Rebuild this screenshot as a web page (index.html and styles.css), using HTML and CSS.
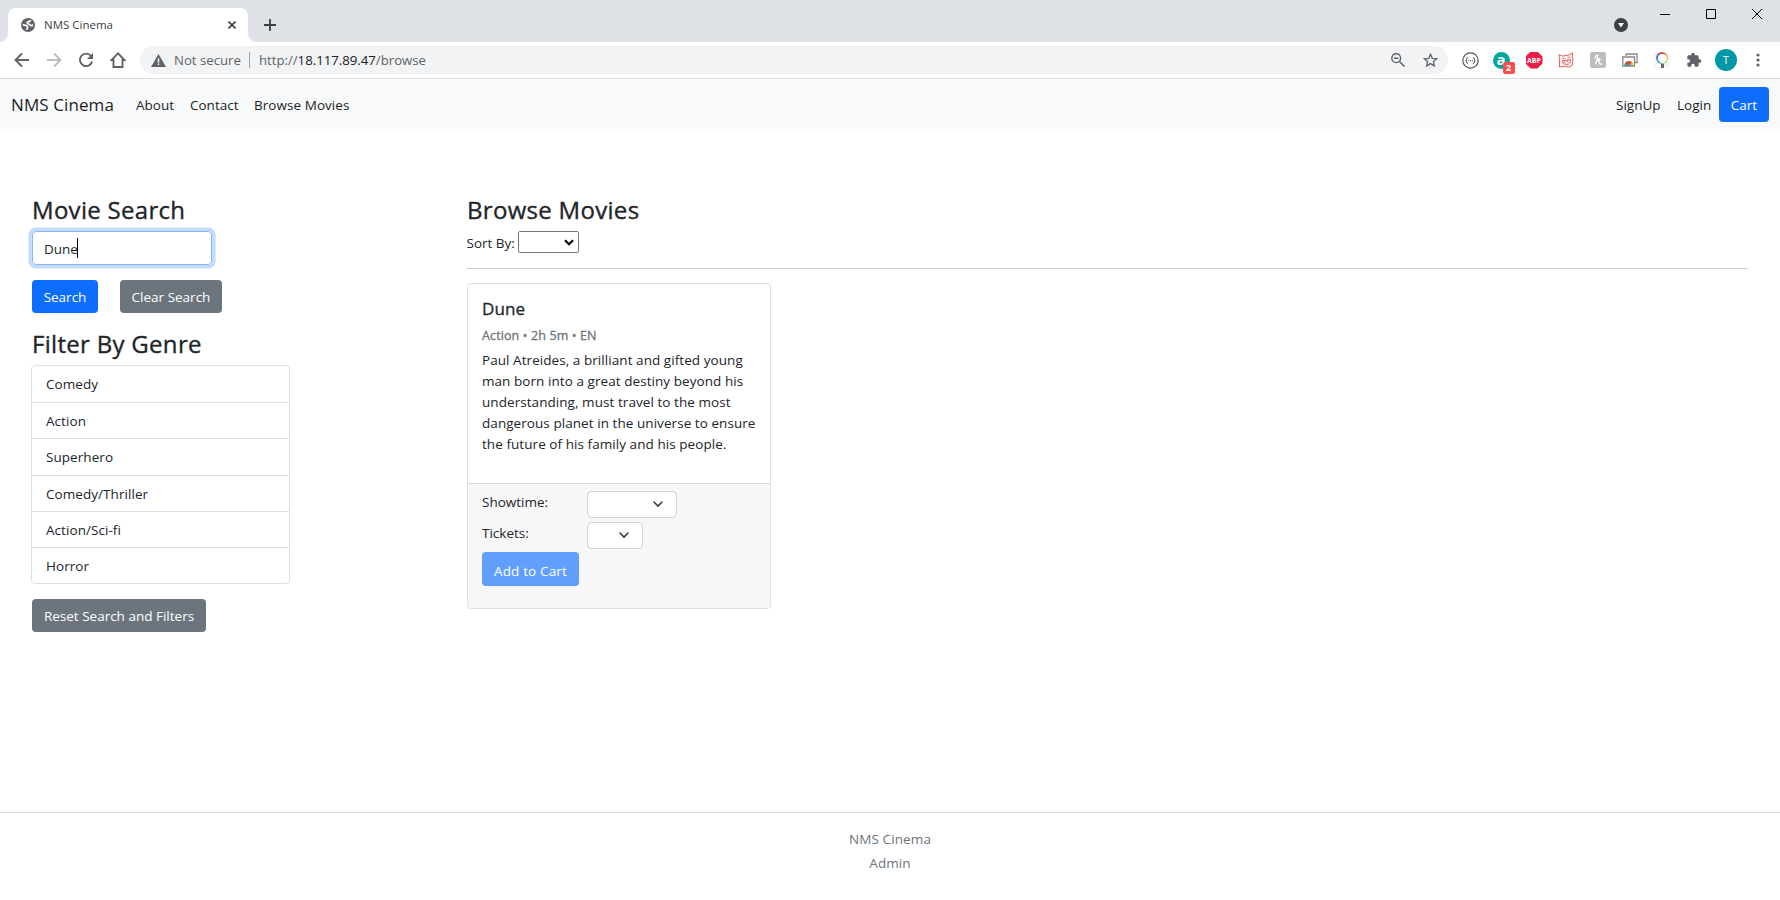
FILE: index.html
```html
<!DOCTYPE html>
<html lang="en">
<head>
<meta charset="utf-8">
<title>NMS Cinema</title>
<link rel="stylesheet" href="styles.css">
</head>
<body>
<header class="chrome">
  <div class="tabstrip">
    <div class="tab">
      <svg class="globe" width="14" height="14" viewBox="0 0 14 14"><circle cx="7" cy="7" r="7" fill="#5f6368"/><path d="M1.800 6.200C3.500 8.200 5 6.600 6.300 8.200S5.600 10 6 11.900M9.600 2.200C9.200 4.400 6.400 3 6.300 4.600S8.400 6.200 9.200 7.200 11 7.400 11.900 6.800" fill="none" stroke="#fff" stroke-width="1.700"/></svg>
      <span class="tab-title">NMS Cinema</span>
      <svg class="tab-close" width="8" height="8" viewBox="0 0 8 8"><path d="M.5.5l7 7M7.500.5l-7 7" stroke="#3c4043" stroke-width="1.6"/></svg>
    </div>
    <svg class="newtab" width="12" height="12" viewBox="0 0 12 12"><path d="M6 0v12M0 6h12" stroke="#3c4043" stroke-width="1.8"/></svg>
    <svg class="update" width="14" height="14" viewBox="0 0 14 14"><circle cx="7" cy="7" r="7" fill="#3c4043"/><path d="M4 5h6L7 9.500z" fill="#fff"/></svg>
    <div class="winbtns">
      <svg width="10" height="11" viewBox="0 0 10 11"><path d="M0 5.500h10" stroke="#000"/></svg>
      <svg width="10" height="10" viewBox="0 0 10 10"><path d="M.5.5h9v9h-9z" fill="none" stroke="#000"/></svg>
      <svg width="10" height="10" viewBox="0 0 10 10"><path d="M0 0l10 10M10 0L0 10" stroke="#000"/></svg>
    </div>
  </div>
  <div class="toolbar">
    <svg class="nav-ic" width="16" height="16" viewBox="0 0 16 16"><path d="M15 8H2M8 1.500L1.500 8 8 14.500" fill="none" stroke="#5f6368" stroke-width="1.9"/></svg>
    <svg class="nav-ic" width="16" height="16" viewBox="0 0 16 16"><path d="M1 8h13M8 1.500L14.500 8 8 14.500" fill="none" stroke="#babcbe" stroke-width="1.9"/></svg>
    <svg class="nav-ic" width="16" height="16" viewBox="0 0 16 16"><path d="M13 4a6.200 6.200 0 1 0 1.100 5.500" fill="none" stroke="#5f6368" stroke-width="1.900"/><path d="M15 1v6H9z" fill="#5f6368"/></svg>
    <svg class="nav-ic" width="16" height="16" viewBox="0 0 16 16"><path d="M8 1.300L1.500 8H3.500V15H12.500V8H14.500z" fill="none" stroke="#5f6368" stroke-width="1.900"/></svg>
    <div class="omnibox">
      <svg width="15" height="13" viewBox="0 0 15 13"><path d="M7.500 0L15 13H0z" fill="#5f6368"/><path d="M7.500 4.500v4M7.500 9.500v1.600" stroke="#fff" stroke-width="1.500"/></svg>
      <span class="insecure">Not secure</span>
      <span class="sep"></span>
      <span class="url">http://<b>18.117.89.47</b>/browse</span>
      <svg class="zoom-ic" width="14" height="14" viewBox="0 0 14 14"><circle cx="5.200" cy="5.200" r="4.400" fill="none" stroke="#5f6368" stroke-width="1.400"/><path d="M8.500 8.500l5 5M3 5.200h4.400" stroke="#5f6368" stroke-width="1.500"/></svg>
      <svg class="star" width="15" height="14" viewBox="0 0 15 14"><path d="M7.500 1.300l1.800 4 4.400.4-3.300 2.900 1 4.300-3.900-2.300-3.900 2.300 1-4.300L1.300 5.700l4.400-.4z" fill="none" stroke="#5f6368" stroke-width="1.300"/></svg>
    </div>
    <div class="exts">
      <svg width="17" height="17" viewBox="0 0 17 17"><circle cx="8.500" cy="8.500" r="7.700" fill="#fff" stroke="#555" stroke-width="1.200"/><path d="M6 5.500q-1.500 0-1.300 1.500t-1 1.500q1.200 0 1 1.500T6 11.500M11 5.500q1.500 0 1.300 1.500t1 1.500q-1.200 0-1 1.500t-1.300 1.500M6.200 8.500h1M8 8.500h1M9.800 8.500h1" fill="none" stroke="#555"/></svg>
      <span class="ext-a">a<i>2</i></span>
      <span class="abp">ABP</span>
      <svg width="16" height="16" viewBox="0 0 16 16"><path d="M1 2.500L4.500 4 11 3l3.500-2.200-.3 4 .8 2-.8 6.700-3 1.500-4-.5-5.700.5L1.500 9z" fill="#fdf1f0" stroke="#df6560"/><path d="M4.500 6.500L7 6M9.500 6L12 4.800M4 9l8.500-1.500Q12.500 12.500 8.500 12.500T4 9M6.500 8.800l.3 1.700M9.500 8.200l.2 1.800" fill="none" stroke="#df6560"/></svg>
      <span class="honey"><svg width="16" height="16" viewBox="0 0 16 16"><path d="M4.500 6.500C6 4 7.800 2.200 7.800 3.600S6.300 9 5.800 12.500M6.300 9C8 6.500 10.300 6 9.900 7.500S8 9 8 9s1.300 0 1.500 2 1.200 1.500 2.500.5" fill="none" stroke="#fff" stroke-width="1.400"/></svg></span>
      <svg width="16" height="14" viewBox="0 0 16 14"><path d="M4 3V1h11v8.500h-2" fill="none" stroke="#888" stroke-width="1.300"/><path d="M.8 4h11.700v9H.8z" fill="#fff" stroke="#888" stroke-width="1.300"/><path d="M2.500 12.400a4.300 4.300 0 0 1 8.600 0z" fill="#ea4335"/><path d="M2.500 12.400q0-2 1.200-3.200l3.100 3.200z" fill="#34a853"/><path d="M7 12.400l2.500-2.900h1.100q.5 1.300.5 2.900z" fill="#fbbc04"/><path d="M4.800 12.400a2 2 0 0 1 4 0z" fill="#4285f4"/></svg>
      <span class="ring"><i></i></span>
      <svg width="16" height="16" viewBox="0 0 24 24"><path d="M20.500 11H19V7c0-1.100-.9-2-2-2h-4V3.500a2.500 2.500 0 0 0-5 0V5H4c-1.100 0-2 .9-2 2v3.800h1.500a2.700 2.700 0 0 1 0 5.400H2V20c0 1.100.9 2 2 2h3.800v-1.500a2.700 2.700 0 0 1 5.400 0V22H17c1.100 0 2-.9 2-2v-4h1.500a2.500 2.500 0 0 0 0-5z" fill="#5f6368"/></svg>
      <span class="avatar">T</span>
      <svg width="4" height="14" viewBox="0 0 4 14"><circle cx="2" cy="2" r="1.600" fill="#5f6368"/><circle cx="2" cy="7" r="1.600" fill="#5f6368"/><circle cx="2" cy="12" r="1.600" fill="#5f6368"/></svg>
    </div>
  </div>
</header>

<nav class="navbar">
  <a class="brand">NMS Cinema</a>
  <a class="link l-about">About</a>
  <a class="link l-contact">Contact</a>
  <a class="link l-browse">Browse Movies</a>
  <a class="link l-signup">SignUp</a>
  <a class="link l-login">Login</a>
  <a class="btn btn-cart">Cart</a>
</nav>

<main class="content">
  <aside class="sidebar">
    <h3 class="h-search">Movie Search</h3>
    <div class="input"><span class="t-input">Dune</span><span class="caret"></span></div>
    <div class="btn-row">
      <button class="btn b-search">Search</button>
      <button class="btn grey b-clear">Clear Search</button>
    </div>
    <h3 class="h-filter">Filter By Genre</h3>
    <ul class="genres">
      <li><span>Comedy</span></li>
      <li><span>Action</span></li>
      <li><span>Superhero</span></li>
      <li><span>Comedy/Thriller</span></li>
      <li><span>Action/Sci-fi</span></li>
      <li><span>Horror</span></li>
    </ul>
    <button class="btn grey b-reset">Reset Search and Filters</button>
  </aside>
  <section class="results">
    <h3 class="h-browse">Browse Movies</h3>
    <div class="sort"><span class="t-sort">Sort By:</span>
      <span class="select-native"><svg width="10" height="7" viewBox="0 0 10 7"><path d="M1 1.200l4 4 4-4" fill="none" stroke="#000" stroke-width="2.200"/></svg></span>
    </div>
    <article class="card">
      <div class="card-body">
        <h5>Dune</h5>
        <h6>Action • 2h 5m • EN</h6>
        <p>Paul Atreides, a brilliant and gifted young<br>man born into a great destiny beyond his<br>understanding, must travel to the most<br>dangerous planet in the universe to ensure<br>the future of his family and his people.</p>
      </div>
      <div class="card-footer">
        <div class="field"><label>Showtime:</label><span class="select s-time"><svg width="10" height="7" viewBox="0 0 10 7"><path d="M1 1l4 4 4-4" fill="none" stroke="#343a40" stroke-width="1.600" stroke-linecap="round"/></svg></span></div>
        <div class="field"><label>Tickets:</label><span class="select s-tix"><svg width="10" height="7" viewBox="0 0 10 7"><path d="M1 1l4 4 4-4" fill="none" stroke="#343a40" stroke-width="1.600" stroke-linecap="round"/></svg></span></div>
        <button class="btn b-add">Add to Cart</button>
      </div>
    </article>
  </section>
</main>

<footer class="footer">
  <div>NMS Cinema</div>
  <div>Admin</div>
</footer>
</body>
</html>
```
FILE: styles.css
```css
* { box-sizing: border-box; }
body { margin: 0; width: 1780px; height: 900px; overflow: hidden; display: flex; flex-direction: column; background: #fff; color: #212529; font: 13.5px/21px "Open Sans", "Noto Sans", sans-serif; white-space: nowrap; }
svg { display: block; flex: none; }
h3, h5, h6, p, ul { margin: 0; padding: 0; }

.chrome { flex: none; height: 79px; border-bottom: 1px solid #d9dbde; }
.tabstrip { height: 42px; background: #dee1e6; display: flex; align-items: flex-start; padding: 8px 18px 0 8px; }
.tab { position: relative; width: 240px; height: 34px; background: #fff; border-radius: 8px 8px 0 0; display: flex; align-items: center; padding: 0 12px 0 13px; }
.tab::before, .tab::after { content: ""; position: absolute; bottom: 0; width: 8px; height: 8px; }
.tab::before { left: -8px; background: radial-gradient(circle at 0 0, #dee1e6 7.500px, #fff 8px); }
.tab::after { right: -8px; background: radial-gradient(circle at 100% 0, #dee1e6 7.500px, #fff 8px); }
.tab-title { margin-left: 9px; font-size: 11.5px; color: #3c4043; line-height: 16px; }
.tab-close { margin-left: auto; }
.newtab { margin: 11px 0 0 16px; }
.update { margin: 10px 0 0 auto; }
.winbtns { display: flex; gap: 36px; margin: 1px 0 0 32px; }

.toolbar { height: 36px; display: flex; align-items: center; padding-left: 14px; }
.nav-ic { margin-right: 16px; }
.omnibox { flex: none; width: 1308px; height: 28px; margin-left: -2px; border-radius: 14px; background: #f1f3f4; display: flex; align-items: center; padding: 0 10px 0 11px; font-size: 13.2px; line-height: 20px; color: #5f6368; }
.insecure { margin-left: 8px; }
.sep { width: 1px; height: 16px; background: #9aa0a6; margin: 0 9px 0 8px; }
.url b { font-weight: 400; color: #202124; }
.zoom-ic { margin-left: auto; margin-right: 18px; }
.exts { display: grid; grid-template-columns: repeat(10, 32px); align-items: center; justify-items: center; margin-left: 6px; }
.ext-a { position: relative; left: -1px; width: 17px; height: 17px; border-radius: 50%; background: #00a79d; color: #fff; font: 700 15px/14px "Open Sans", sans-serif; text-align: center; }
.ext-a i { position: absolute; left: 10px; top: 10px; width: 12px; height: 12px; border-radius: 2px; background: #ff4d4f; font: 700 9px/12px "Open Sans", sans-serif; }
.abp { width: 17px; height: 17px; background: #ed1e45; clip-path: polygon(30% 0, 70% 0, 100% 30%, 100% 70%, 70% 100%, 30% 100%, 0 70%, 0 30%); color: #fff; font: 700 7px/17px "Open Sans", sans-serif; text-align: center; }
.honey { width: 16px; height: 16px; background: #bdbdbd; border-radius: 2px; }
.ring { width: 16px; height: 16px; background: #f7f7f7; display: flex; justify-content: center; position: relative; }
.ring::before { content: ""; width: 12px; height: 12px; border-radius: 50%; background: conic-gradient(#e94f3d, #f4a62a, #8bc34a, #31a7d8, #5b6fd6, #e94f3d); }
.ring::after { content: ""; position: absolute; left: 3.500px; top: 1.500px; width: 9px; height: 9px; border-radius: 50%; background: #fff; }
.ring i { position: absolute; left: 6.500px; top: 12px; width: 3px; height: 4px; background: #666; }
.avatar { width: 22px; height: 22px; border-radius: 50%; background: #0097a7; color: #fff; font-size: 11.500px; line-height: 22px; text-align: center; }

.navbar { flex: none; height: 50px; background: #f8f9fb; display: flex; align-items: center; padding: 0 11px; color: #1c1f22; }
.navbar .brand { width: 125px; font-size: 17px; letter-spacing: .1px; padding-top: 1px; }
.link { padding-top: 3px; }
.l-about { width: 54px; }
.l-contact { width: 64px; }
.l-browse { letter-spacing: .05px; }
.l-signup { margin-left: auto; width: 61px; }
.l-login { width: 42px; }

.btn { display: flex; align-items: center; justify-content: center; border: 0; padding: 1px 0 0; border-radius: 4px; background: #0d6efd; color: #fff; font: 13.500px/20px "Open Sans", "Noto Sans", sans-serif; height: 33px; }
.btn.grey { background: #6c757d; }
.btn-cart { width: 50px; height: 35px; }

.content { flex: none; display: flex; height: 683px; padding-top: 67px; }
.sidebar { width: 467px; padding-left: 32px; }
h3 { font-size: 24px; line-height: 28px; font-weight: 500; letter-spacing: .3px; -webkit-text-stroke: .35px #212529; }
.input { width: 180px; height: 34px; margin-top: 7px; border: 1px solid #86b7fe; border-radius: 4px; box-shadow: 0 0 0 3.600px #c2dbfe; display: flex; align-items: center; padding-left: 11px; }
.t-input { padding-top: 2px; }
.caret { width: 1px; height: 20px; background: #000; margin-left: -1px; }
.btn-row { display: flex; gap: 22px; margin: 15px 0 17px; }
.b-search { width: 66px; }
.b-clear { width: 102px; }
.genres { list-style: none; width: 259px; margin: 7px 0 15px -1px; border: 1px solid #dfdfdf; border-radius: 4px; }
.genres li { height: 36.200px; padding: 8px 14px 0; letter-spacing: .06px; }
.genres li + li { border-top: 1px solid #dfdfdf; }
.b-reset { width: 174px; }
.results { width: 1281px; }
.sort { display: flex; height: 38px; border-bottom: 1px solid #c8c9ca; margin-top: 7px; margin-bottom: 14px; }
.t-sort { width: 51px; margin-top: 2px; margin-left: -.5px; }
.select-native { width: 61px; height: 22px; border: 1px solid #767676; border-radius: 2px; display: flex; align-items: center; justify-content: flex-end; padding-right: 4px; }
.card { width: 304px; height: 326px; border: 1px solid #dfdfdf; border-radius: 4px; overflow: hidden; }
.card-body { height: 200px; padding: 15px 14px 0; border-bottom: 1px solid #d8d8d8; }
.card-body p { letter-spacing: .06px; }
h5 { font-size: 17px; line-height: 20px; font-weight: 500; letter-spacing: .1px; -webkit-text-stroke: .3px #212529; }
h6 { font-size: 12.500px; line-height: 17px; font-weight: 500; color: #6c757d; margin: 8px 0 6px; letter-spacing: .12px; -webkit-text-stroke: .3px #6c757d; }
.card-footer { background: #f7f7f7; height: 124px; padding: 7px 14px; }
.field { display: flex; height: 31px; }
.field label { width: 105px; padding-top: 1px; }
.select { height: 27px; border: 1px solid #ced4da; border-radius: 4px; background: #fff; display: flex; align-items: center; justify-content: flex-end; padding-right: 13px; }
.s-time { width: 90px; }
.s-tix { width: 56px; }
.b-add { width: 97px; height: 34px; margin-top: -1px; padding-top: 3px; background: #609ffe; letter-spacing: .15px; }

.footer { flex: none; border-top: 1px solid #dadbdc; height: 88px; text-align: center; padding-top: 14px; line-height: 24px; letter-spacing: .1px; color: #6c757d; }
```
